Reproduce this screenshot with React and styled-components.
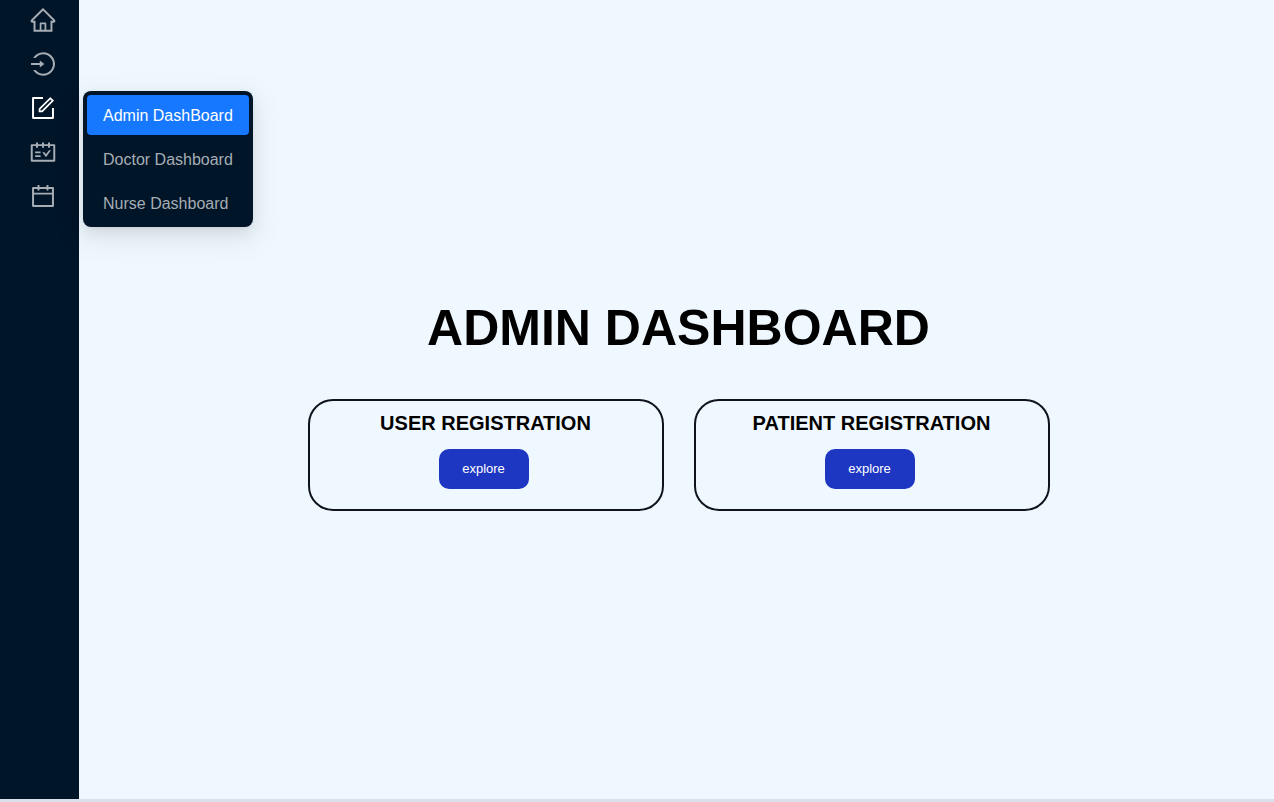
import React from "react";
import styled, { createGlobalStyle } from "styled-components";
import {
  AiOutlineHome,
  AiOutlineLogin,
  AiOutlineForm,
  AiOutlineSchedule,
  AiOutlineCalendar,
} from "react-icons/ai";

const GlobalStyle = createGlobalStyle`
  * { box-sizing: border-box; }
  body {
    margin: 0;
    background: #f0f8ff;
    font-family: "Liberation Sans", Arial, sans-serif;
  }
`;

const Page = styled.div`
  display: flex;
  min-height: 100vh;
  border-bottom: 3px solid #d9e1ee;
`;

const Sidebar = styled.nav`
  flex: none;
  width: 79px;
  padding-left: 7px;
  background: #001528;
`;

const NavList = styled.ul`
  display: grid;
  gap: 4px;
  margin: 0;
  padding: 0;
  list-style: none;
`;

const NavItem = styled.li`
  position: relative;
`;

const NavButton = styled.button`
  display: flex;
  align-items: center;
  justify-content: center;
  width: 100%;
  height: 40px;
  padding: 0;
  border: 0;
  background: transparent;
  color: ${({ $active }) => ($active ? "#ffffff" : "#a6adb4")};
  cursor: pointer;

  svg {
    width: 28px;
    height: 28px;
  }
`;

const Submenu = styled.ul`
  position: absolute;
  top: 3px;
  left: 100%;
  display: grid;
  gap: 4px;
  width: 170px;
  margin: 0 0 0 4px;
  padding: 4px;
  border-radius: 8px;
  background: #001528;
  list-style: none;
  box-shadow:
    0 6px 16px 0 rgba(0, 0, 0, 0.08),
    0 3px 6px -4px rgba(0, 0, 0, 0.12),
    0 9px 28px 8px rgba(0, 0, 0, 0.05);
`;

const SubmenuLink = styled.a`
  display: block;
  height: 40px;
  padding: 0 16px;
  border-radius: 4px;
  background: ${({ $selected }) => ($selected ? "#1677ff" : "transparent")};
  color: ${({ $selected }) => ($selected ? "#ffffff" : "#a6adb4")};
  font-size: 16px;
  line-height: 42px;
  text-decoration: none;
  white-space: nowrap;
`;

const Main = styled.main`
  flex: 1;
  display: flex;
  flex-direction: column;
  align-items: center;
  justify-content: center;
  gap: 39px;
  padding: 7px 0 0 4px;
`;

const Title = styled.h1`
  margin: 0;
  color: #000000;
  font-size: 50px;
  line-height: 64px;
  text-align: center;
`;

const Cards = styled.div`
  display: flex;
  flex-wrap: wrap;
  justify-content: center;
  gap: 30px;
`;

const Card = styled.section`
  display: flex;
  flex-direction: column;
  align-items: center;
  gap: 14px;
  width: 356px;
  padding: 10px 0 20px;
  border: 2px solid #10141a;
  border-radius: 25px;
`;

const CardTitle = styled.h2`
  margin: 0;
  color: #000000;
  font-size: 20px;
  line-height: 24px;
`;

const ExploreButton = styled.button`
  width: 90px;
  height: 40px;
  margin-right: 4px;
  padding: 0;
  border: 0;
  border-radius: 10px;
  background: #1d37c2;
  color: #ffffff;
  font-family: inherit;
  font-size: 13px;
  cursor: pointer;
`;

const navItems = [
  { label: "Home", Icon: AiOutlineHome },
  { label: "Login", Icon: AiOutlineLogin },
  {
    label: "Dashboards",
    Icon: AiOutlineForm,
    children: ["Admin DashBoard", "Doctor Dashboard", "Nurse Dashboard"],
  },
  { label: "Schedule", Icon: AiOutlineSchedule },
  { label: "Calendar", Icon: AiOutlineCalendar },
];

const cards = ["USER REGISTRATION", "PATIENT REGISTRATION"];

export default function App() {
  return (
    <>
      <GlobalStyle />
      <Page>
        <Sidebar aria-label="Main">
          <NavList>
            {navItems.map(({ label, Icon, children }) => (
              <NavItem key={label}>
                <NavButton type="button" aria-label={label} $active={Boolean(children)}>
                  <Icon aria-hidden="true" />
                </NavButton>
                {children && (
                  <Submenu>
                    {children.map((name, index) => (
                      <li key={name}>
                        <SubmenuLink href="#" $selected={index === 0}>
                          {name}
                        </SubmenuLink>
                      </li>
                    ))}
                  </Submenu>
                )}
              </NavItem>
            ))}
          </NavList>
        </Sidebar>
        <Main>
          <Title>ADMIN DASHBOARD</Title>
          <Cards>
            {cards.map((name) => (
              <Card key={name}>
                <CardTitle>{name}</CardTitle>
                <ExploreButton type="button">explore</ExploreButton>
              </Card>
            ))}
          </Cards>
        </Main>
      </Page>
    </>
  );
}
